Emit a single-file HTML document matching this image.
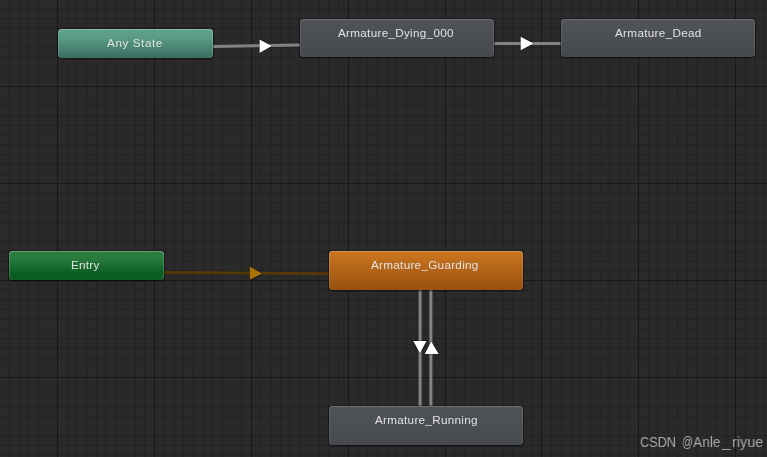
<!DOCTYPE html>
<html><head><meta charset="utf-8">
<style>
html,body{margin:0;padding:0;}
body{width:767px;height:457px;overflow:hidden;background:#2a2a2a;position:relative;font-family:"Liberation Sans",sans-serif;}
svg{position:absolute;left:0;top:0;}
.n{position:absolute;box-sizing:border-box;border-radius:4px;}
.g{background:linear-gradient(#505357,#46494d);box-shadow:inset 0 1px 0 rgba(255,255,255,0.16),inset 1px 0 0 rgba(255,255,255,0.1),inset -1px 0 0 rgba(255,255,255,0.1),0 0 0 1px rgba(0,0,0,0.24),0 1px 1px 1px rgba(0,0,0,0.24);}
.any{background:linear-gradient(#60a38d,#5a9b86 30%,#3e7265 90%,#3b6f62);box-shadow:inset 0 1px 0 rgba(255,255,255,0.26),inset 1px 0 0 rgba(255,255,255,0.14),inset -1px 0 0 rgba(255,255,255,0.2),0 0 0 1px rgba(0,0,0,0.24),0 1px 1px 1px rgba(0,0,0,0.24);}
.entry{background:linear-gradient(#2b7c3f,#2a7b3e 25%,#0c5f24 75%,#0a5c22);box-shadow:inset 0 1px 0 rgba(255,255,255,0.28),inset 1px 0 0 rgba(255,255,255,0.16),inset -1px 0 0 rgba(255,255,255,0.2),0 0 0 1px rgba(0,0,0,0.24),0 1px 1px 1px rgba(0,0,0,0.24);}
.orange{background:linear-gradient(#c9731f,#c5711e 15%,#9c5411 90%,#985210);box-shadow:inset 0 1px 0 rgba(255,255,255,0.25),inset 1px 0 0 rgba(255,255,255,0.14),inset -1px 0 0 rgba(255,255,255,0.14),0 0 0 1px rgba(0,0,0,0.24),0 1px 1px 1px rgba(0,0,0,0.24);}
.lb,.wm{position:absolute;white-space:nowrap;line-height:1;will-change:transform;}
.lb{color:#e2e2e2;}
</style></head><body>
<svg width="767" height="457">
<rect x="-0.91" y="0" width="1" height="457" fill="#242424"/>
<rect x="8.77" y="0" width="1" height="457" fill="#242424"/>
<rect x="18.46" y="0" width="1" height="457" fill="#242424"/>
<rect x="28.14" y="0" width="1" height="457" fill="#242424"/>
<rect x="37.83" y="0" width="1" height="457" fill="#242424"/>
<rect x="47.51" y="0" width="1" height="457" fill="#242424"/>
<rect x="66.89" y="0" width="1" height="457" fill="#242424"/>
<rect x="76.57" y="0" width="1" height="457" fill="#242424"/>
<rect x="86.26" y="0" width="1" height="457" fill="#242424"/>
<rect x="95.94" y="0" width="1" height="457" fill="#242424"/>
<rect x="105.63" y="0" width="1" height="457" fill="#242424"/>
<rect x="115.31" y="0" width="1" height="457" fill="#242424"/>
<rect x="125.0" y="0" width="1" height="457" fill="#242424"/>
<rect x="134.69" y="0" width="1" height="457" fill="#242424"/>
<rect x="144.37" y="0" width="1" height="457" fill="#242424"/>
<rect x="163.74" y="0" width="1" height="457" fill="#242424"/>
<rect x="173.43" y="0" width="1" height="457" fill="#242424"/>
<rect x="183.11" y="0" width="1" height="457" fill="#242424"/>
<rect x="192.8" y="0" width="1" height="457" fill="#242424"/>
<rect x="202.49" y="0" width="1" height="457" fill="#242424"/>
<rect x="212.17" y="0" width="1" height="457" fill="#242424"/>
<rect x="221.86" y="0" width="1" height="457" fill="#242424"/>
<rect x="231.54" y="0" width="1" height="457" fill="#242424"/>
<rect x="241.23" y="0" width="1" height="457" fill="#242424"/>
<rect x="260.6" y="0" width="1" height="457" fill="#242424"/>
<rect x="270.29" y="0" width="1" height="457" fill="#242424"/>
<rect x="279.97" y="0" width="1" height="457" fill="#242424"/>
<rect x="289.66" y="0" width="1" height="457" fill="#242424"/>
<rect x="299.34" y="0" width="1" height="457" fill="#242424"/>
<rect x="309.03" y="0" width="1" height="457" fill="#242424"/>
<rect x="318.71" y="0" width="1" height="457" fill="#242424"/>
<rect x="328.4" y="0" width="1" height="457" fill="#242424"/>
<rect x="338.09" y="0" width="1" height="457" fill="#242424"/>
<rect x="357.46" y="0" width="1" height="457" fill="#242424"/>
<rect x="367.14" y="0" width="1" height="457" fill="#242424"/>
<rect x="376.83" y="0" width="1" height="457" fill="#242424"/>
<rect x="386.51" y="0" width="1" height="457" fill="#242424"/>
<rect x="396.2" y="0" width="1" height="457" fill="#242424"/>
<rect x="405.89" y="0" width="1" height="457" fill="#242424"/>
<rect x="415.57" y="0" width="1" height="457" fill="#242424"/>
<rect x="425.26" y="0" width="1" height="457" fill="#242424"/>
<rect x="434.94" y="0" width="1" height="457" fill="#242424"/>
<rect x="454.31" y="0" width="1" height="457" fill="#242424"/>
<rect x="464.0" y="0" width="1" height="457" fill="#242424"/>
<rect x="473.69" y="0" width="1" height="457" fill="#242424"/>
<rect x="483.37" y="0" width="1" height="457" fill="#242424"/>
<rect x="493.06" y="0" width="1" height="457" fill="#242424"/>
<rect x="502.74" y="0" width="1" height="457" fill="#242424"/>
<rect x="512.43" y="0" width="1" height="457" fill="#242424"/>
<rect x="522.11" y="0" width="1" height="457" fill="#242424"/>
<rect x="531.8" y="0" width="1" height="457" fill="#242424"/>
<rect x="551.17" y="0" width="1" height="457" fill="#242424"/>
<rect x="560.86" y="0" width="1" height="457" fill="#242424"/>
<rect x="570.54" y="0" width="1" height="457" fill="#242424"/>
<rect x="580.23" y="0" width="1" height="457" fill="#242424"/>
<rect x="589.91" y="0" width="1" height="457" fill="#242424"/>
<rect x="599.6" y="0" width="1" height="457" fill="#242424"/>
<rect x="609.29" y="0" width="1" height="457" fill="#242424"/>
<rect x="618.97" y="0" width="1" height="457" fill="#242424"/>
<rect x="628.66" y="0" width="1" height="457" fill="#242424"/>
<rect x="648.03" y="0" width="1" height="457" fill="#242424"/>
<rect x="657.71" y="0" width="1" height="457" fill="#242424"/>
<rect x="667.4" y="0" width="1" height="457" fill="#242424"/>
<rect x="677.09" y="0" width="1" height="457" fill="#242424"/>
<rect x="686.77" y="0" width="1" height="457" fill="#242424"/>
<rect x="696.46" y="0" width="1" height="457" fill="#242424"/>
<rect x="706.14" y="0" width="1" height="457" fill="#242424"/>
<rect x="715.83" y="0" width="1" height="457" fill="#242424"/>
<rect x="725.51" y="0" width="1" height="457" fill="#242424"/>
<rect x="744.89" y="0" width="1" height="457" fill="#242424"/>
<rect x="754.57" y="0" width="1" height="457" fill="#242424"/>
<rect x="764.26" y="0" width="1" height="457" fill="#242424"/>
<rect x="0" y="8.4" width="767" height="1" fill="#242424"/>
<rect x="0" y="18.1" width="767" height="1" fill="#242424"/>
<rect x="0" y="27.8" width="767" height="1" fill="#242424"/>
<rect x="0" y="37.5" width="767" height="1" fill="#242424"/>
<rect x="0" y="47.2" width="767" height="1" fill="#242424"/>
<rect x="0" y="56.9" width="767" height="1" fill="#242424"/>
<rect x="0" y="66.6" width="767" height="1" fill="#242424"/>
<rect x="0" y="76.3" width="767" height="1" fill="#242424"/>
<rect x="0" y="95.7" width="767" height="1" fill="#242424"/>
<rect x="0" y="105.4" width="767" height="1" fill="#242424"/>
<rect x="0" y="115.1" width="767" height="1" fill="#242424"/>
<rect x="0" y="124.8" width="767" height="1" fill="#242424"/>
<rect x="0" y="134.5" width="767" height="1" fill="#242424"/>
<rect x="0" y="144.2" width="767" height="1" fill="#242424"/>
<rect x="0" y="153.9" width="767" height="1" fill="#242424"/>
<rect x="0" y="163.6" width="767" height="1" fill="#242424"/>
<rect x="0" y="173.3" width="767" height="1" fill="#242424"/>
<rect x="0" y="192.7" width="767" height="1" fill="#242424"/>
<rect x="0" y="202.4" width="767" height="1" fill="#242424"/>
<rect x="0" y="212.1" width="767" height="1" fill="#242424"/>
<rect x="0" y="221.8" width="767" height="1" fill="#242424"/>
<rect x="0" y="231.5" width="767" height="1" fill="#242424"/>
<rect x="0" y="241.2" width="767" height="1" fill="#242424"/>
<rect x="0" y="250.9" width="767" height="1" fill="#242424"/>
<rect x="0" y="260.6" width="767" height="1" fill="#242424"/>
<rect x="0" y="270.3" width="767" height="1" fill="#242424"/>
<rect x="0" y="289.7" width="767" height="1" fill="#242424"/>
<rect x="0" y="299.4" width="767" height="1" fill="#242424"/>
<rect x="0" y="309.1" width="767" height="1" fill="#242424"/>
<rect x="0" y="318.8" width="767" height="1" fill="#242424"/>
<rect x="0" y="328.5" width="767" height="1" fill="#242424"/>
<rect x="0" y="338.2" width="767" height="1" fill="#242424"/>
<rect x="0" y="347.9" width="767" height="1" fill="#242424"/>
<rect x="0" y="357.6" width="767" height="1" fill="#242424"/>
<rect x="0" y="367.3" width="767" height="1" fill="#242424"/>
<rect x="0" y="386.7" width="767" height="1" fill="#242424"/>
<rect x="0" y="396.4" width="767" height="1" fill="#242424"/>
<rect x="0" y="406.1" width="767" height="1" fill="#242424"/>
<rect x="0" y="415.8" width="767" height="1" fill="#242424"/>
<rect x="0" y="425.5" width="767" height="1" fill="#242424"/>
<rect x="0" y="435.2" width="767" height="1" fill="#242424"/>
<rect x="0" y="444.9" width="767" height="1" fill="#242424"/>
<rect x="0" y="454.6" width="767" height="1" fill="#242424"/>
<rect x="57" y="0" width="1" height="457" fill="#181818"/>
<rect x="154" y="0" width="1" height="457" fill="#181818"/>
<rect x="251" y="0" width="1" height="457" fill="#181818"/>
<rect x="348" y="0" width="1" height="457" fill="#181818"/>
<rect x="445" y="0" width="1" height="457" fill="#181818"/>
<rect x="541" y="0" width="1" height="457" fill="#181818"/>
<rect x="638" y="0" width="1" height="457" fill="#181818"/>
<rect x="735" y="0" width="1" height="457" fill="#181818"/>
<rect x="0" y="86" width="767" height="1" fill="#181818"/>
<rect x="0" y="183" width="767" height="1" fill="#181818"/>
<rect x="0" y="280" width="767" height="1" fill="#181818"/>
<rect x="0" y="377" width="767" height="1" fill="#181818"/>
</svg>
<svg width="767" height="457">
<line x1="213" y1="46.5" x2="300" y2="45" stroke="#848484" stroke-width="3"/>
<polygon points="259.6,39.4 271.6,45.9 259.6,52.9" fill="none" stroke="rgba(0,0,0,0.3)" stroke-width="1.6" stroke-linejoin="round"/>
<polygon points="259.6,39.4 271.6,45.9 259.6,52.9" fill="#fff"/>
<line x1="494" y1="43.5" x2="561" y2="43.5" stroke="#848484" stroke-width="3"/>
<polygon points="520.7,36.7 533.4,43.4 520.7,50.3" fill="none" stroke="rgba(0,0,0,0.3)" stroke-width="1.6" stroke-linejoin="round"/>
<polygon points="520.7,36.7 533.4,43.4 520.7,50.3" fill="#fff"/>
<line x1="164" y1="272.3" x2="329" y2="273.7" stroke="#553806" stroke-width="2.7"/>
<polygon points="249.8,266.6 261.9,273.4 249.8,279.8" fill="none" stroke="rgba(0,0,0,0.3)" stroke-width="1.6" stroke-linejoin="round"/>
<polygon points="249.8,266.6 261.9,273.4 249.8,279.8" fill="#ab7308"/>
<line x1="420.1" y1="290" x2="420.1" y2="406" stroke="#848484" stroke-width="3"/>
<line x1="430.9" y1="290" x2="430.9" y2="406" stroke="#848484" stroke-width="3"/>
<polygon points="413.3,341 426.5,341 419.9,353.2" fill="none" stroke="rgba(0,0,0,0.3)" stroke-width="1.6" stroke-linejoin="round"/>
<polygon points="413.3,341 426.5,341 419.9,353.2" fill="#fff"/>
<polygon points="424.7,354 438.7,354 431.2,341.5" fill="none" stroke="rgba(0,0,0,0.3)" stroke-width="1.6" stroke-linejoin="round"/>
<polygon points="424.7,354 438.7,354 431.2,341.5" fill="#fff"/>
</svg>
<div class="n any" style="left:58px;top:29px;width:155px;height:29px;"></div><div class="n g" style="left:300px;top:19px;width:194px;height:38.3px;"></div><div class="n g" style="left:561px;top:19px;width:194px;height:38.3px;"></div><div class="n entry" style="left:9px;top:251px;width:155px;height:28.8px;"></div><div class="n orange" style="left:329px;top:251px;width:194px;height:38.8px;"></div><div class="n g" style="left:329px;top:406px;width:194px;height:38.5px;"></div>
<div class="lb" style="left:106.73px;top:37px;font-size:11.7px;letter-spacing:0.582px;">Any State</div><div class="lb" style="left:337.73px;top:27px;font-size:11.7px;letter-spacing:0.296px;">Armature_Dying_000</div><div class="lb" style="left:614.73px;top:27px;font-size:11.7px;letter-spacing:0.318px;">Armature_Dead</div><div class="lb" style="left:71.0px;top:259px;font-size:11.7px;letter-spacing:0.265px;">Entry</div><div class="lb" style="left:370.73px;top:259px;font-size:11.7px;letter-spacing:0.294px;">Armature_Guarding</div><div class="lb" style="left:374.73px;top:414px;font-size:11.7px;letter-spacing:0.288px;">Armature_Running</div><div class="wm" style="left:640.27px;top:434.2px;font-size:15.3px;letter-spacing:0px;color:rgba(215,215,215,0.72);transform:scaleX(0.83);transform-origin:0 0;">CSDN</div><div class="wm" style="left:682.29px;top:434.2px;font-size:15.3px;letter-spacing:0px;color:rgba(215,215,215,0.72);transform:scaleX(0.71);transform-origin:0 0;">@</div><div class="wm" style="left:693px;top:434.2px;font-size:15.3px;letter-spacing:0px;color:rgba(215,215,215,0.72);transform:scaleX(0.9);transform-origin:0 0;">Anle</div><div class="wm" style="left:722px;top:434.2px;font-size:15.3px;letter-spacing:0px;color:rgba(215,215,215,0.72);transform:scaleX(1.0);transform-origin:0 0;">_</div><div class="wm" style="left:731.8599999999999px;top:434.2px;font-size:15.3px;letter-spacing:0px;color:rgba(215,215,215,0.72);transform:scaleX(0.94);transform-origin:0 0;">riyue</div>
</body></html>
